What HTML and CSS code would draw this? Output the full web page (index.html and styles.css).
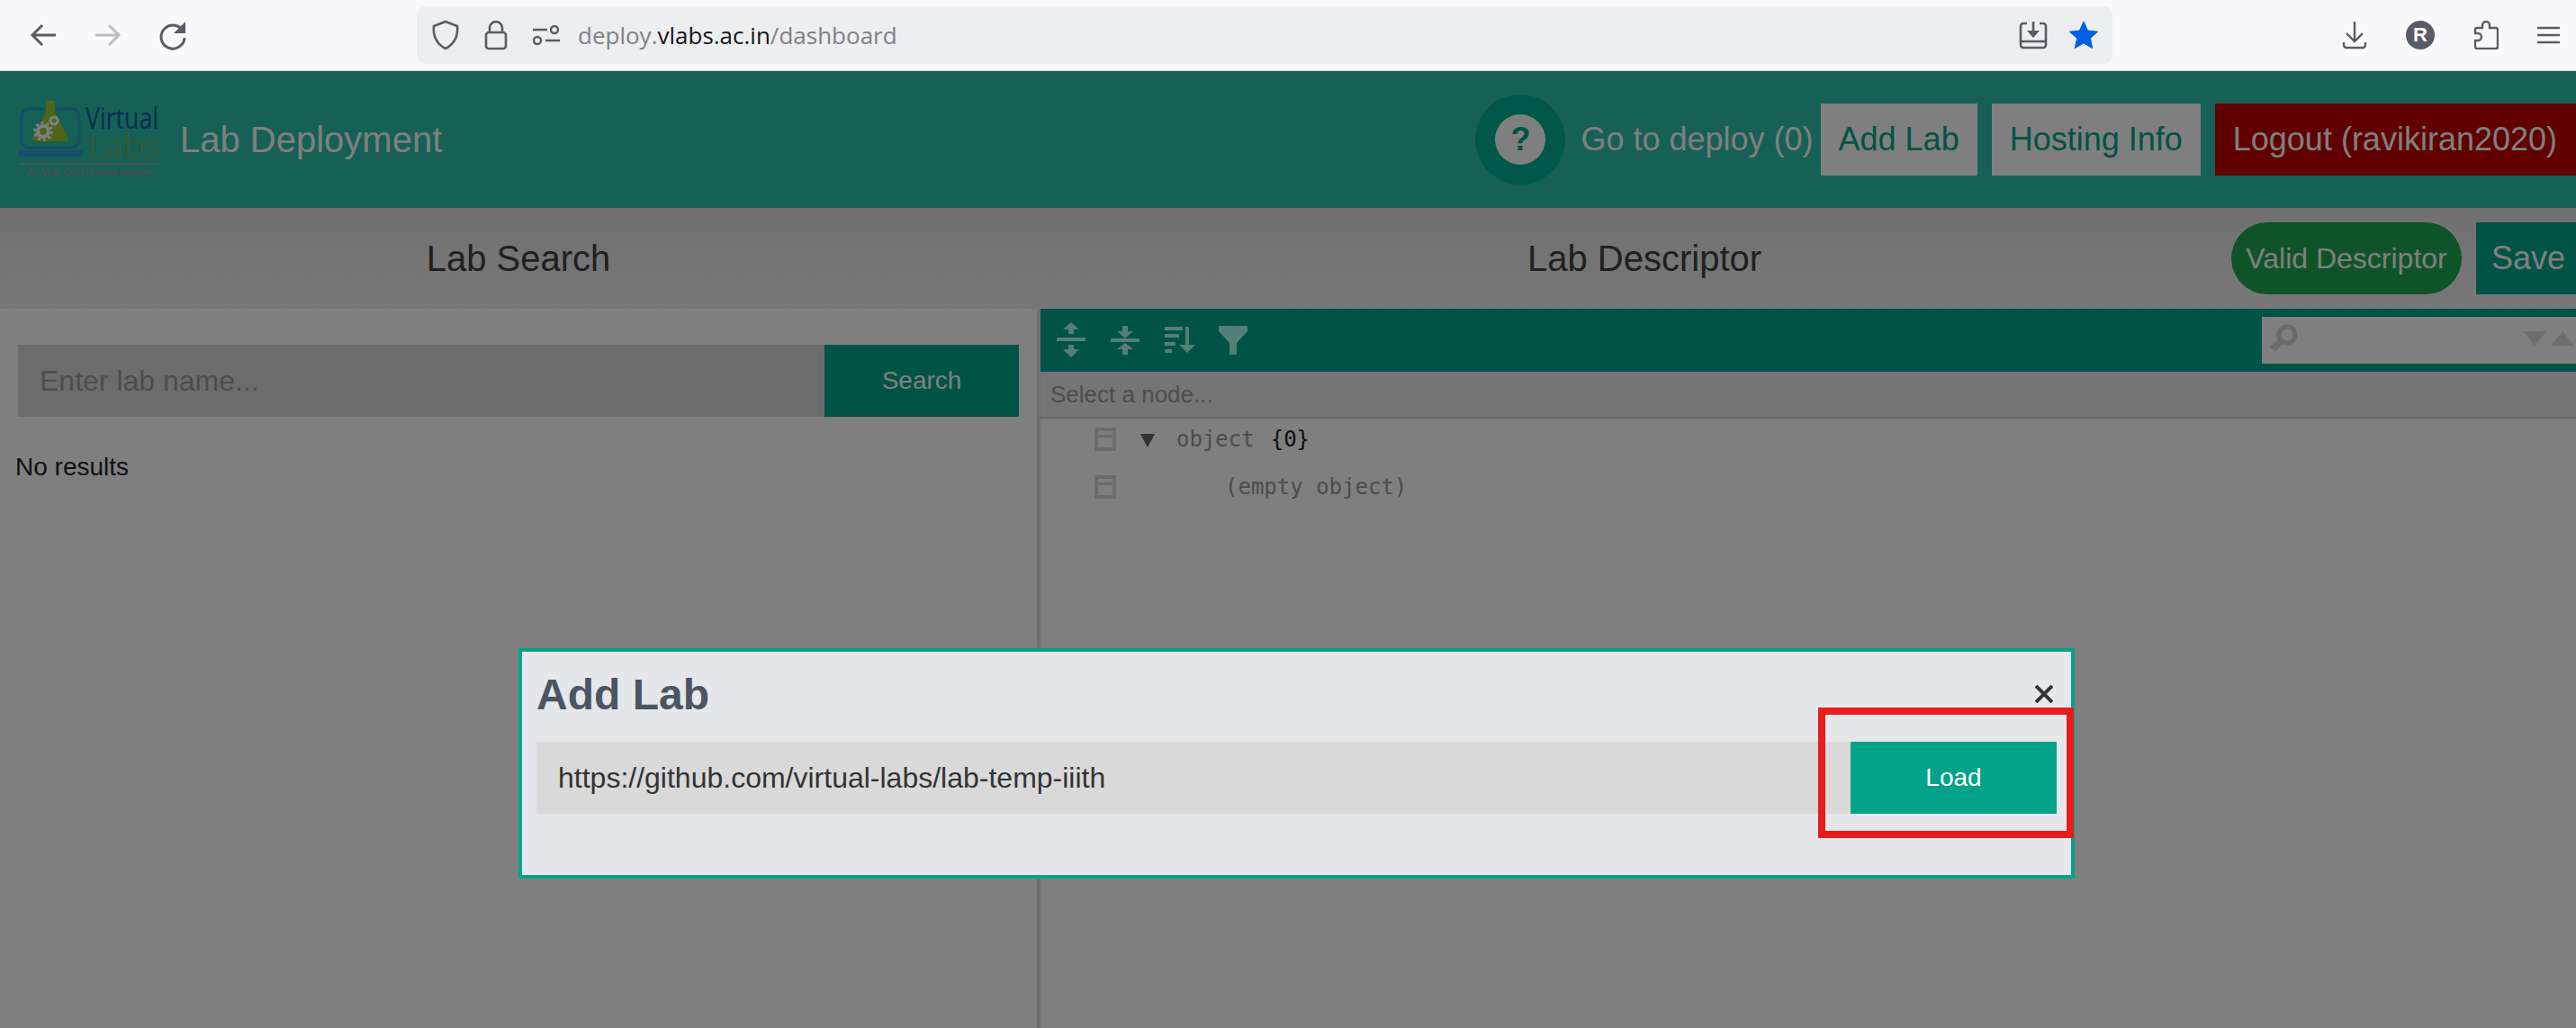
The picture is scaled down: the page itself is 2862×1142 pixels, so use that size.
FILE: index.html
```html
<!DOCTYPE html>
<html lang="en">
<head>
    <meta charset="UTF-8">
    <meta name="viewport" content="width=device-width, initial-scale=1.0">
    <title>Lab Deployment</title>
    <link rel="stylesheet" href="styles.css">
</head>
<body>

    <!-- browser toolbar -->
    <div class="browser-bar">
        <div class="nav-icons">
            <svg class="ico" width="34" height="34" viewBox="0 0 34 34"><path d="M31 17H5M16 6 5 17l11 11" fill="none" stroke="#5b5b66" stroke-width="3"/></svg>
            <svg class="ico" width="34" height="34" viewBox="0 0 34 34"><path d="M3 17h26M18 6l11 11-11 11" fill="none" stroke="#bcbcc1" stroke-width="3"/></svg>
            <svg class="ico" width="34" height="34" viewBox="0 0 34 34"><path d="M29 14A13 13 0 1 0 30 20" fill="none" stroke="#5b5b66" stroke-width="3"/><path d="M31 2v13H18z" fill="#5b5b66"/></svg>
        </div>
        <div class="address-bar">
            <svg class="ico" width="32" height="34" viewBox="0 0 32 34"><path d="M16 2 29 7c1 10-2 19-13 25C5 26 2 17 3 7z" fill="none" stroke="#5b5b66" stroke-width="2.6"/></svg>
            <svg class="ico" width="26" height="34" viewBox="0 0 26 34"><rect x="2" y="14" width="22" height="18" rx="3" fill="none" stroke="#5b5b66" stroke-width="2.6"/><path d="M6 14V9a7 7 0 0 1 14 0v5" fill="none" stroke="#5b5b66" stroke-width="2.6"/></svg>
            <svg class="ico" width="30" height="26" viewBox="0 0 30 26"><path d="M0 7h16M14 19h16" stroke="#5b5b66" stroke-width="2.6"/><circle cx="24" cy="7" r="4" fill="none" stroke="#5b5b66" stroke-width="2.4"/><circle cx="5" cy="19" r="4" fill="none" stroke="#5b5b66" stroke-width="2.4"/></svg>
            <span class="url">deploy.<b>vlabs.ac.in</b>/dashboard</span>
            <div class="address-end">
                <svg class="ico" width="32" height="32" viewBox="0 0 32 32"><path d="M9 3H5a3 3 0 0 0-3 3v21a3 3 0 0 0 3 3h22a3 3 0 0 0 3-3V6a3 3 0 0 0-3-3h-4M2 23h28" fill="none" stroke="#5b5b66" stroke-width="2.6"/><path d="M16 1v12" stroke="#5b5b66" stroke-width="2.6"/><path d="M9 11h14l-7 8z" fill="#5b5b66"/></svg>
                <svg class="ico" width="32" height="32" viewBox="0 0 32 32"><path d="M16 1l4.600 10 11 1.200-8.200 7.400 2.300 10.900L16 25l-9.700 5.500 2.300-10.900L.4 12.200l11-1.200z" fill="#0060df" stroke="#0060df" stroke-width="1" stroke-linejoin="round"/></svg>
            </div>
        </div>
        <div class="tool-icons">
            <svg class="ico" width="28" height="32" viewBox="0 0 28 32"><path d="M14 1v22M5 14l9 9 9-9" fill="none" stroke="#5b5b66" stroke-width="2.4"/><path d="M2 24v3a3 3 0 0 0 3 3h18a3 3 0 0 0 3-3v-3" fill="none" stroke="#5b5b66" stroke-width="2.4"/></svg>
            <span class="avatar">R</span>
            <svg class="ico" width="28" height="32" viewBox="0 0 28 32"><path d="M10 8V5a4 4 0 0 1 8 0v3h7a2 2 0 0 1 2 2v19a2 2 0 0 1-2 2H4a2 2 0 0 1-2-2v-7h3a4 4 0 0 0 0-8H2v-4a2 2 0 0 1 2-2z" fill="none" stroke="#5b5b66" stroke-width="2.4"/></svg>
            <svg class="ico" width="25" height="20" viewBox="0 0 25 20"><path d="M0 2h25M0 10h25M0 18h25" stroke="#5b5b66" stroke-width="2.6"/></svg>
        </div>
    </div>

    <div class="page">
        <header class="site-header">
            <div class="brand">
                <svg class="logo" width="160" height="90" viewBox="0 0 160 90">
                    <rect x="4" y="11" width="64" height="43" rx="8" fill="none" stroke="#2a9cd0" stroke-width="3"/>
                    <path d="M30 1h12v14l14 26c2 5 0 7-4 7H20c-4 0-6-2-4-7l14-26z" fill="#a0c834" stroke="#2cc0aa" stroke-width="2"/>
                    <rect x="0" y="57" width="72" height="7" rx="3" fill="#2a9cd0"/>
                    <circle cx="28" cy="36" r="6" fill="none" stroke="#fff" stroke-width="4"/>
                    <circle cx="28" cy="36" r="9.500" fill="none" stroke="#fff" stroke-width="3" stroke-dasharray="3 3"/>
                    <circle cx="40" cy="24" r="4" fill="none" stroke="#fff" stroke-width="3"/>
                    <text x="75" y="33" class="logo-virtual" textLength="81" lengthAdjust="spacingAndGlyphs">Virtual</text>
                    <text x="77" y="65" class="logo-labs" textLength="81" lengthAdjust="spacingAndGlyphs">Labs</text>
                    <path d="M0 72h158" stroke="#aaa" stroke-width="1.500"/>
                    <text x="10" y="85" class="logo-tag" textLength="140" lengthAdjust="spacingAndGlyphs">An MoE Govt of India Initiative</text>
                </svg>
                <span class="site-title">Lab Deployment</span>
            </div>
            <nav class="header-actions">
                <span class="help"><span class="help-mark">?</span></span>
                <a class="deploy-link">Go to deploy (0)</a>
                <a class="header-btn">Add Lab</a>
                <a class="header-btn">Hosting Info</a>
                <a class="header-btn logout">Logout (ravikiran2020)</a>
            </nav>
        </header>

        <div class="panel-heads">
            <h2 class="head-left">Lab Search</h2>
            <div class="head-right">
                <h2>Lab Descriptor</h2>
                <div class="head-actions">
                    <span class="valid-pill">Valid Descriptor</span>
                    <span class="save-btn">Save</span>
                </div>
            </div>
        </div>

        <div class="panels">
            <section class="search-panel">
                <div class="search-row">
                    <input class="search-input" type="text" placeholder="Enter lab name...">
                    <button class="search-btn">Search</button>
                </div>
                <p class="no-results">No results</p>
            </section>

            <section class="editor">
                <div class="editor-menu">
                    <svg class="tool" width="32" height="39" viewBox="0 0 32 39"><path d="M16 0l9 8h-6v5h-6V8H7zM0 17h32v4H0zM13 25h6v5h6l-9 9-9-9h6z"/></svg>
                    <svg class="tool" width="32" height="32" viewBox="0 0 32 32"><path d="M13 0h6v6h6l-9 8-9-8h6zM0 14h32v4H0zM16 19l9 7h-6v6h-6v-6H7z"/></svg>
                    <svg class="tool tool-sort" width="34" height="30" viewBox="0 0 34 30"><path d="M0 0h20v4H0zM0 8h16v4H0zM0 17h12v4H0zM0 25h8v4H0zM23 0h4v20h7l-9 9-9-9h7z"/></svg>
                    <svg class="tool" width="32" height="32" viewBox="0 0 32 32"><path d="M0 0h32v6L20 19v13h-8V19L0 6z"/></svg>
                    <div class="find-box">
                        <svg width="32" height="32" viewBox="0 0 32 32"><circle cx="20" cy="12" r="9" fill="none" stroke="#d6d6d6" stroke-width="5"/><path d="M14 18 4 28" stroke="#d6d6d6" stroke-width="8"/></svg>
                        <div class="find-arrows">
                            <span class="arrow-down"></span>
                            <span class="arrow-up"></span>
                        </div>
                    </div>
                </div>
                <div class="editor-nav">Select a node...</div>
                <div class="tree">
                    <div class="tree-row">
                        <span class="drag"></span>
                        <span class="caret"></span>
                        <span class="tree-key">object</span>
                        <span class="tree-count">{0}</span>
                    </div>
                    <div class="tree-row">
                        <span class="drag"></span>
                        <span class="tree-empty">(empty object)</span>
                    </div>
                </div>
            </section>
        </div>
    </div>

    <!-- modal lies over the dimmed page -->
    <div class="backdrop"></div>
    <div class="modal">
        <div class="modal-top">
            <h2>Add Lab</h2>
            <svg class="close" width="20" height="20" viewBox="0 0 20 20"><path d="M1 1l18 18M19 1 1 19" stroke="#333" stroke-width="4"/></svg>
        </div>
        <div class="modal-row">
            <input class="url-input" type="text" value="https://github.com/virtual-labs/lab-temp-iiith">
            <button class="load-btn">Load</button>
        </div>
    </div>
    <div class="callout"></div>

</body>
</html>
```

FILE: styles.css
```css
* {
    box-sizing: border-box;
}
html, body {
    height: 100%;
}
body {
    margin: 0;
    overflow: hidden;
    font-family: "Liberation Sans", Arial, sans-serif;
    background-color: #fff;
}
.ico {
    display: block;
    flex: none;
}

/* browser toolbar */
.browser-bar {
    display: flex;
    align-items: center;
    height: 79px;
    background-color: #f9f9fb;
    border-bottom: 1px solid #cfcfd8;
}
.nav-icons {
    display: flex;
    gap: 38px;
    width: 463px;
    padding-left: 31px;
}
.address-bar {
    display: flex;
    align-items: center;
    width: 1884px;
    height: 64px;
    padding: 0 16px 0 16px;
    background-color: #edeef0;
    border-radius: 10px;
}
.address-bar > .ico:nth-child(2) {
    margin-left: 27px;
}
.address-bar > .ico:nth-child(3) {
    margin-left: 28px;
}
.url {
    margin-left: 20px;
    font-family: "Open Sans", sans-serif;
    font-size: 26px;
    color: #80808a;
}
.url b {
    font-weight: 400;
    color: #15141a;
}
.address-end {
    display: flex;
    gap: 24px;
    margin-left: auto;
}
.tool-icons {
    display: flex;
    align-items: center;
    gap: 43px;
    margin-left: 255px;
}
.avatar {
    width: 32px;
    height: 32px;
    border-radius: 50%;
    background-color: #5b5b66;
    color: #fff;
    font-size: 22px;
    font-weight: 700;
    line-height: 32px;
    text-align: center;
}

/* page */
.page {
    display: flex;
    flex-direction: column;
    height: 1063px;
}
.site-header {
    display: flex;
    align-items: center;
    justify-content: space-between;
    height: 152px;
    padding-left: 20px;
    background-color: #2cc0aa;
}
.brand {
    display: flex;
    align-items: center;
}
.logo {
    overflow: visible;
}
.logo-virtual {
    font-family: "Open Sans", sans-serif;
    font-size: 32px;
    fill: #0f5f9a;
}
.logo-labs {
    font-family: "Open Sans", sans-serif;
    font-size: 36px;
    font-weight: 300;
    fill: #80b048;
}
.logo-tag {
    font-size: 10px;
    fill: #b0949c;
}
.site-title {
    margin-left: 20px;
    font-size: 40px;
    color: #fff;
}
.header-actions {
    display: flex;
    align-items: center;
}
.help {
    display: flex;
    align-items: center;
    justify-content: center;
    width: 100px;
    height: 100px;
    background-color: #00b095;
    border-radius: 50%;
}
.help-mark {
    width: 56px;
    height: 56px;
    border-radius: 50%;
    background-color: #fff;
    color: #00a68a;
    font-size: 36px;
    font-weight: 700;
    line-height: 56px;
    text-align: center;
}
.deploy-link {
    margin-left: 17px;
    margin-right: 8px;
    font-size: 36px;
    color: #fff;
}
.header-btn {
    height: 80px;
    margin-right: 16px;
    padding: 0 20px;
    background-color: #fff;
    color: #00a68a;
    font-size: 36px;
    line-height: 80px;
}
.logout {
    margin-right: 0;
    padding: 0 21px 0 20px;
    background-color: #c00000;
    color: #fff;
}

/* panel titles */
.panel-heads {
    display: flex;
    height: 112px;
    background: linear-gradient(#e2e2e2, #f0f0f0);
}
.panel-heads h2 {
    margin: 0;
    font-size: 40px;
    font-weight: 400;
    color: #404040;
}
.head-left {
    width: 1152px;
    line-height: 112px;
    text-align: center;
}
.head-right {
    display: flex;
    align-items: center;
    flex: 1;
    padding-left: 545px;
}
.head-actions {
    display: flex;
    gap: 16px;
    margin-left: auto;
}
.valid-pill {
    width: 256px;
    height: 80px;
    background-color: #1ea850;
    border-radius: 40px;
    color: #fff;
    font-size: 32px;
    line-height: 80px;
    text-align: center;
}
.save-btn {
    width: 111px;
    height: 80px;
    padding-left: 17px;
    background-color: #00a68a;
    color: #fff;
    font-size: 36px;
    line-height: 80px;
}

/* panels */
.panels {
    display: flex;
    flex: 1;
}
.search-panel {
    width: 1152px;
    padding: 40px 20px 0;
    background-color: #fff;
}
.search-row {
    display: flex;
    height: 80px;
}
.search-input {
    flex: 1;
    padding: 0 24px;
    background-color: #d9d9d9;
    border: 0;
    font-family: inherit;
    font-size: 32px;
}
.search-input::placeholder {
    color: #9a9a9a;
}
.search-btn {
    width: 216px;
    background-color: #00a68a;
    border: 0;
    color: #fff;
    font-family: inherit;
    font-size: 28px;
}
.no-results {
    margin: 40px 0 0 -3px;
    font-size: 28px;
    color: #222;
}

/* json editor */
.editor {
    flex: 1;
    background-color: #fff;
    border-left: 4px solid #dedede;
}
.editor-menu {
    display: flex;
    align-items: center;
    gap: 28px;
    height: 70px;
    padding-left: 18px;
    background-color: #00a68a;
    border-bottom: 1px solid #3883fa;
}
.tool {
    flex: none;
    fill: #a8fef0;
}
.tool-sort {
    margin-right: -2px;
}
.find-box {
    display: flex;
    align-items: center;
    justify-content: space-between;
    width: 349px;
    height: 52px;
    margin-left: auto;
    padding: 0 2px 4px 8px;
    background-color: #fff;
}
.find-arrows {
    display: flex;
    gap: 5px;
}
.arrow-down {
    border-left: 13.5px solid transparent;
    border-right: 13.5px solid transparent;
    border-top: 16px solid #dcdcdc;
}
.arrow-up {
    border-left: 13.5px solid transparent;
    border-right: 13.5px solid transparent;
    border-bottom: 16px solid #dcdcdc;
}
.editor-nav {
    height: 52px;
    padding: 0 11px;
    background-color: #ebebeb;
    border-bottom: 2px solid #ccc;
    color: #9a9a9a;
    font-size: 26px;
    line-height: 50px;
}
.tree {
    font-family: "DejaVu Sans Mono", monospace;
    font-size: 24px;
    line-height: 26px;
}
.tree-row {
    display: flex;
    align-items: flex-start;
    height: 53px;
    padding: 10px 0 0 60px;
}
.drag {
    width: 24px;
    height: 26px;
    border: 4px solid #d6d6d6;
}
.drag::before {
    content: "";
    display: block;
    height: 3px;
    margin-top: 4px;
    background-color: #d6d6d6;
}
.caret {
    width: 0;
    height: 0;
    margin: 7px 0 0 27px;
    border-left: 8.5px solid transparent;
    border-right: 8.5px solid transparent;
    border-top: 15px solid #666;
}
.tree-key {
    margin-left: 24px;
    color: #999;
}
.tree-count {
    margin-left: 18px;
    color: #222;
}
.tree-empty {
    margin-left: 121px;
    color: #999;
}

/* modal */
.backdrop {
    position: fixed;
    top: 79px;
    left: 0;
    right: 0;
    bottom: 0;
    background-color: rgba(0, 0, 0, 0.5);
}
.modal {
    position: fixed;
    top: 720px;
    left: 576px;
    width: 1729px;
    height: 256px;
    padding: 0 16px;
    background-color: #e5e7eb;
    border: 4px solid #02a388;
}
.modal-top {
    display: flex;
    align-items: center;
    justify-content: space-between;
    height: 100px;
    padding-bottom: 6px;
}
.modal-top h2 {
    margin: 0;
    font-size: 48px;
    font-weight: 700;
    color: #4b5563;
}
.close {
    margin-right: 4px;
}
.modal-row {
    display: flex;
    height: 80px;
}
.url-input {
    flex: 1;
    padding: 0 24px;
    background-color: #d9d9d9;
    border: 0;
    color: #333;
    font-family: inherit;
    font-size: 32px;
}
.load-btn {
    width: 229px;
    background-color: #02a388;
    border: 0;
    color: #fff;
    font-family: inherit;
    font-size: 28px;
}
.callout {
    position: fixed;
    top: 786px;
    left: 2020px;
    width: 284px;
    height: 145px;
    border: 8px solid #e71c1c;
}
```
